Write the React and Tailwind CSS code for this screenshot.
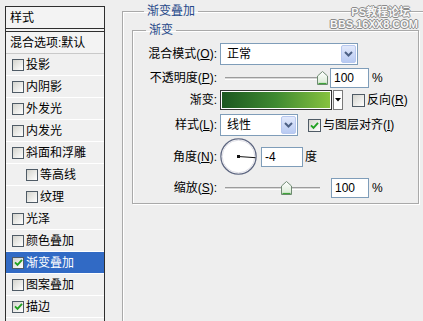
import React from 'react';

// Photoshop 图层样式 dialog: 渐变叠加 panel
const effects = [
  { label: '投影' },
  { label: '内阴影' },
  { label: '外发光' },
  { label: '内发光' },
  { label: '斜面和浮雕' },
  { label: '等高线', indent: true },
  { label: '纹理', indent: true },
  { label: '光泽' },
  { label: '颜色叠加' },
  { label: '渐变叠加', checked: true, active: true },
  { label: '图案叠加' },
  { label: '描边', checked: true },
  { label: '' },
];

const CheckBox = ({ checked = false, big = false, className = '' }) => (
  <span
    className={`flex shrink-0 items-center justify-center border border-[#4f5b66] bg-linear-to-br from-[#d4d4ce] to-white ${big ? 'h-[13px] w-[13px]' : 'h-[12px] w-[12px]'} ${className}`}
  >
    {checked && (
      <svg width="9" height="9" viewBox="0 0 9 9">
        <path d="M1 4.3 L3.5 6.8 L8 1.8" fill="none" stroke="#21a121" strokeWidth="1.9" />
      </svg>
    )}
  </span>
);

const Mn = ({ text, k, colon = true }) => (
  <>
    {text}(<span className="underline">{k}</span>){colon ? ':' : ''}
  </>
);

const Row = ({ label, className = '', children }) => (
  <div className={`flex items-center ${className}`}>
    <div className="w-[84px] shrink-0 text-right">{label}</div>
    <div className="ml-[3px] flex items-center">{children}</div>
  </div>
);

const Select = ({ value, className = '' }) => (
  <div className={`flex h-[22px] items-center border border-[#7f9db9] bg-white ${className}`}>
    <span className="flex-1 pl-[6px]">{value}</span>
    <span className="mr-[1px] flex h-[18px] w-[15px] items-center justify-center rounded-[2px] border border-[#b7c8ef] bg-linear-to-b from-[#e2e9fb] to-[#b8caf2]">
      <svg width="9" height="6" viewBox="0 0 9 6">
        <path d="M1 1 L4.5 4.5 L8 1" fill="none" stroke="#4d6185" strokeWidth="2" />
      </svg>
    </span>
  </div>
);

const Thumb = ({ className = '' }) => (
  <svg className={`absolute top-0 ${className}`} width="11" height="14" viewBox="0 0 11 14">
    <defs>
      <linearGradient id="tg" x1="0" y1="0" x2="0" y2="1">
        <stop offset="0" stopColor="#ffffff" />
        <stop offset="1" stopColor="#d6e8d2" />
      </linearGradient>
    </defs>
    <path d="M0.5 5 L5.5 0.5 L10.5 5 L10.5 13.5 L0.5 13.5 Z" fill="url(#tg)" stroke="#6f8a72" />
    <path d="M1.5 12.5 L9.5 12.5" stroke="#3fa33a" strokeWidth="1.2" />
  </svg>
);

const Slider = ({ thumb }) => (
  <div className="relative h-[14px] w-[108px]">
    <div className="absolute left-[5px] top-[6px] h-[3px] w-[95px] border-t border-b border-t-[#9c9c9c] border-b-white bg-[#d8d8d8]" />
    <Thumb className={thumb} />
  </div>
);

const Field = ({ value, className = '' }) => (
  <div className={`flex h-[20px] items-center border border-[#7f9db9] bg-white pl-[3px] ${className}`}>{value}</div>
);

const App = () => {
  return (
    <div className="relative flex h-[321px] w-[423px] items-start overflow-hidden bg-[#eeeeee] font-['Liberation_Sans','Noto_Sans_CJK_SC',sans-serif] text-[12px] leading-[16px] text-black">
      {/* 左侧样式列表 */}
      <div className="ml-[5px] mt-[6px] w-[100px] shrink-0 border border-[#2e2e2e] bg-[#f0f0f0]">
        <div className="flex h-[22px] items-center border-b border-[#2e2e2e] bg-[#f3f3f3] pl-[4px]">样式</div>
        <div className="h-[2px] bg-[#f3f3f3]" />
        <div className="border-t border-[#2e2e2e]">
          <div className="flex h-[22px] items-center border-b border-[#c9c9c9] bg-[#f3f3f3] pl-[4px]">混合选项:默认</div>
          {effects.map((e, i) => (
            <div
              key={i}
              className={`flex h-[22px] items-center border-b border-white ${e.indent ? 'pl-[20px]' : 'pl-[6px]'} ${e.active ? 'bg-[#316ac5] text-white' : ''}`}
            >
              {e.label && <CheckBox checked={e.checked} />}
              <span className="ml-[2px]">{e.label}</span>
            </div>
          ))}
        </div>
      </div>

      {/* 右侧 渐变叠加 设置 */}
      <fieldset className="ml-[17px] mt-[3px] h-[340px] w-[320px] shrink-0 border border-[#a9a9a9] pl-[9px] shadow-[inset_1px_1px_0_#fff,1px_1px_0_#fff]">
        <legend className="ml-[12px] px-[3px] text-[#27498a]">渐变叠加</legend>
        <fieldset className="mt-[3px] h-[182px] w-[287px] border border-[#a9a9a9] shadow-[inset_1px_1px_0_#fff,1px_1px_0_#fff]">
          <legend className="ml-[13px] px-[3px] text-[#27498a]">渐变</legend>

          <Row label={<Mn text="混合模式" k="O" />} className="mt-[5px] h-[22px]">
            <Select value="正常" className="w-[138px]" />
          </Row>

          <Row label={<Mn text="不透明度" k="P" />} className="mt-[3px] h-[20px]">
            <Slider thumb="left-[97px]" />
            <Field value="100" className="ml-[2px] w-[39px]" />
            <span className="ml-[3px]">%</span>
          </Row>

          <Row label="渐变:" className="mt-[2px] h-[20px]">
            <div className="h-[20px] w-[112px] border border-[#333333] bg-white p-[1px]">
              <div className="h-full w-full bg-linear-to-r from-[#1c5720] via-[#3f8a31] to-[#86c23f]" />
            </div>
            <div className="ml-[1px] flex h-[20px] w-[10px] items-center justify-center border border-[#7a7a7a] bg-white">
              <svg width="6" height="4" viewBox="0 0 6 4">
                <path d="M0 0 L6 0 L3 3.5 Z" fill="#000" />
              </svg>
            </div>
            <CheckBox big className="ml-[9px]" />
            <span className="ml-[2px]"><Mn text="反向" k="R" colon={false} /></span>
          </Row>

          <Row label={<Mn text="样式" k="L" />} className="mt-[4px] h-[22px]">
            <Select value="线性" className="w-[78px]" />
            <CheckBox big checked className="ml-[10px]" />
            <span className="ml-[2px]"><Mn text="与图层对齐" k="I" colon={false} /></span>
          </Row>

          <Row label={<Mn text="角度" k="N" />} className="mt-[2px] h-[37px]">
            <svg width="37" height="37" viewBox="0 0 37 37">
              <circle cx="18.5" cy="18.5" r="17.6" fill="#ffffff" stroke="#5d6680" strokeWidth="1.3" />
              <circle cx="18.5" cy="18.5" r="16.3" fill="none" stroke="#dcdce4" strokeWidth="1" />
              <line x1="18.5" y1="18.5" x2="35.5" y2="19.7" stroke="#111" strokeWidth="1" />
              <rect x="17" y="17" width="3" height="3" fill="#111" />
            </svg>
            <Field value="-4" className="ml-[4px] w-[42px]" />
            <span className="ml-[2px]">度</span>
          </Row>

          <Row label={<Mn text="缩放" k="S" />} className="mt-[3px] h-[20px]">
            <Slider thumb="left-[61px]" />
            <Field value="100" className="ml-[3px] w-[38px]" />
            <span className="ml-[3px]">%</span>
          </Row>
        </fieldset>
      </fieldset>

      {/* 水印 */}
      <div className="absolute right-[5px] top-[6px] flex flex-col items-end text-[11px] font-bold leading-[12px] text-[#f7f7f7] [text-shadow:1px_0_#8a8a8a,-1px_0_#8a8a8a,0_1px_#8a8a8a,0_-1px_#8a8a8a]">
        <span className="mr-[8px]">PS教程论坛</span>
        <span>BBS.16XX8.COM</span>
      </div>
    </div>
  );
};

export default App;
